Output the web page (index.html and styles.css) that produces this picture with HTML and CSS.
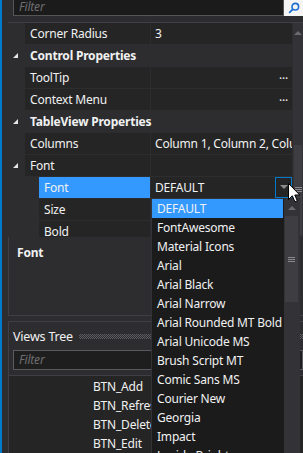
FILE: index.html
```html
<!DOCTYPE html>
<html lang="en">
<head>
    <meta charset="UTF-8">
    <meta name="viewport" content="width=device-width, initial-scale=1.0">
    <title>Properties</title>
    <link rel="stylesheet" href="styles.css">
</head>
<body>
    <div class="accent"></div>
    <div class="main">
        <div class="search">
            <div class="search-box">Filter</div>
            <div class="search-btn">
                <svg width="12" height="12" viewBox="0 0 12 12"><circle cx="7.3" cy="4.7" r="3.3" fill="none" stroke="#1c6ed1" stroke-width="1.6"/><line x1="4.9" y1="7.1" x2="1.2" y2="10.8" stroke="#1c6ed1" stroke-width="1.8"/></svg>
            </div>
        </div>

        <div class="grid">
            <div class="rows">
                <div class="row">
                    <div class="gutter"></div>
                    <div class="name">Corner Radius</div>
                    <div class="value">3</div>
                </div>
                <div class="row category">
                    <div class="gutter"><span class="expander"></span></div>
                    <div class="cat-title">Control Properties</div>
                </div>
                <div class="row">
                    <div class="gutter"></div>
                    <div class="name">ToolTip</div>
                    <div class="value"><span class="ellipsis">...</span></div>
                </div>
                <div class="row">
                    <div class="gutter"></div>
                    <div class="name">Context Menu</div>
                    <div class="value"><span class="ellipsis">...</span></div>
                </div>
                <div class="row category">
                    <div class="gutter"><span class="expander"></span></div>
                    <div class="cat-title">TableView Properties</div>
                </div>
                <div class="row">
                    <div class="gutter"></div>
                    <div class="name">Columns</div>
                    <div class="value">Column 1, Column 2, Column 3</div>
                </div>
                <div class="row">
                    <div class="gutter"><span class="expander"></span></div>
                    <div class="name">Font</div>
                    <div class="value"></div>
                </div>
                <div class="row sub">
                    <div class="gutter"></div>
                    <div class="name selected">Font</div>
                    <div class="value combo">
                        <span>DEFAULT</span>
                        <span class="combo-btn"><span class="arrow-down"></span></span>
                    </div>
                </div>
                <div class="row sub">
                    <div class="gutter"></div>
                    <div class="name">Size</div>
                    <div class="value"></div>
                </div>
                <div class="row sub">
                    <div class="gutter"></div>
                    <div class="name">Bold</div>
                    <div class="value"></div>
                </div>
            </div>
            <div class="vscroll">
                <span class="arrow-up"></span>
                <div class="thumb"><span class="grip"></span></div>
            </div>
        </div>

        <div class="desc">
            <div class="desc-title">Font</div>
        </div>

        <div class="tree-panel">
            <div class="tree-header">
                <span>Views Tree</span>
                <span class="dots"></span>
            </div>
            <div class="tree-filter">Filter</div>
            <div class="tree-list">
                <div class="tree-item">BTN_Add</div>
                <div class="tree-item">BTN_Refresh</div>
                <div class="tree-item">BTN_Delete</div>
                <div class="tree-item">BTN_Edit</div>
            </div>
        </div>
    </div>

    <div class="popup">
        <div class="list">
            <div class="option active">DEFAULT</div>
            <div class="option">FontAwesome</div>
            <div class="option">Material Icons</div>
            <div class="option">Arial</div>
            <div class="option">Arial Black</div>
            <div class="option">Arial Narrow</div>
            <div class="option">Arial Rounded MT Bold</div>
            <div class="option">Arial Unicode MS</div>
            <div class="option">Brush Script MT</div>
            <div class="option">Comic Sans MS</div>
            <div class="option">Courier New</div>
            <div class="option">Georgia</div>
            <div class="option">Impact</div>
            <div class="option">Lucida Bright</div>
        </div>
        <div class="popup-scroll">
            <div class="pbtn"><span class="arrow-up"></span></div>
            <div class="pthumb"><span class="grip"></span></div>
            <div class="ptrack"></div>
            <div class="pbtn"><span class="arrow-down light"></span></div>
        </div>
    </div>

    <svg class="cursor" width="13" height="20" viewBox="0 0 13 20"><path d="M0.5 0.5 L0.5 16.5 L4.3 12.8 L6.9 18.8 L9.3 17.8 L6.8 12 L11.8 12 Z" fill="#fff" stroke="#000" stroke-width="1"/></svg>
</body>
</html>
```

FILE: styles.css
```css
body {
    margin: 0;
    width: 303px;
    height: 453px;
    overflow: hidden;
    position: relative;
    display: flex;
    background-color: #2d2d30;
    color: #f1f1f1;
    font-family: 'Noto Sans', 'Open Sans', sans-serif;
    font-size: 12px;
    letter-spacing: -0.2px;
}

.accent {
    width: 2px;
    flex-shrink: 0;
    background-color: #007acc;
}

.main {
    flex: 1;
    min-width: 0;
    display: flex;
    flex-direction: column;
    padding-left: 6px;
}

/* Top filter */
.search {
    display: flex;
    height: 16px;
    margin-left: 5px;
}

.search-box {
    flex: 1;
    background-color: #1b1b1c;
    border: 1px solid #555558;
    border-top: none;
    color: #6e6e72;
    font-style: italic;
    line-height: 14px;
    padding-left: 5px;
}

.search-btn {
    width: 19px;
    background-color: #f5f5f5;
    display: flex;
    align-items: center;
    justify-content: center;
}

/* Property grid */
.grid {
    margin-top: 6px;
    height: 215px;
    border-top: 1px solid #3f3f46;
    display: flex;
    overflow: hidden;
}

.rows {
    flex: 1;
    min-width: 0;
}

.row {
    display: flex;
    height: 21px;
    margin-bottom: 1px;
    line-height: 21px;
}

.gutter {
    width: 17px;
    flex-shrink: 0;
    position: relative;
}

.row.sub .gutter {
    width: 31px;
}

.expander {
    position: absolute;
    left: 5px;
    top: 8px;
    width: 0;
    height: 0;
    border-left: 5px solid transparent;
    border-bottom: 5px solid #e6e6e6;
}

.name {
    width: 120px;
    flex-shrink: 0;
    background-color: #252526;
    padding-left: 5px;
    margin-right: 1px;
}

.row.sub .name {
    width: 106px;
}

.name.selected {
    background-color: #3399ff;
}

.value {
    flex: 1;
    min-width: 0;
    background-color: #252526;
    padding-left: 4px;
    white-space: nowrap;
    overflow: hidden;
    position: relative;
}

.ellipsis {
    position: absolute;
    right: 4px;
    top: -3px;
}

.combo-btn {
    position: absolute;
    right: 0;
    top: 0;
    width: 15px;
    height: 19px;
    border: 1px solid #007acc;
    display: flex;
    align-items: center;
    justify-content: center;
}

.arrow-down {
    width: 0;
    height: 0;
    border-left: 4px solid transparent;
    border-right: 4px solid transparent;
    border-top: 4px solid #8a8a8a;
}

.arrow-down.light {
    border-top-color: #b0b0b0;
}

.arrow-up {
    width: 0;
    height: 0;
    border-left: 4px solid transparent;
    border-right: 4px solid transparent;
    border-bottom: 4px solid #6b6b6e;
}

.category .cat-title {
    font-weight: bold;
    padding-left: 5px;
}

.vscroll {
    width: 10px;
    flex-shrink: 0;
    margin-left: 1px;
    background-color: #333337;
    display: flex;
    flex-direction: column;
    align-items: center;
    padding-top: 8px;
}

.vscroll .thumb {
    margin-top: 110px;
    width: 8px;
    height: 90px;
    background-color: #3e3e42;
    display: flex;
    align-items: center;
    justify-content: center;
}

.grip {
    width: 7px;
    height: 5px;
    background: repeating-linear-gradient(#8a8a8e 0 1px, transparent 1px 2px);
}

/* Description */
.desc {
    height: 79px;
    border-left: 1px solid #3f3f46;
    border-bottom: 1px solid #3f3f46;
    padding: 7px 8px;
    box-sizing: border-box;
}

.desc-title {
    font-weight: bold;
}

/* Views tree */
.tree-panel {
    margin-top: 5px;
    flex: 1;
    border-top: 1px solid #3f3f46;
    border-left: 1px solid #3f3f46;
    display: flex;
    flex-direction: column;
}

.tree-header {
    height: 28px;
    display: flex;
    align-items: center;
    padding-left: 4px;
    gap: 6px;
    font-size: 12.5px;
}

.dots {
    flex: 1;
    height: 5px;
    background: repeating-conic-gradient(#5c5c60 0 25%, transparent 0 50%) 0 0 / 2px 2px;
}

.tree-filter {
    margin-left: 4px;
    height: 18px;
    border: 1px solid #5a5a5e;
    background-color: #1e1e1e;
    color: #6e6e72;
    font-style: italic;
    line-height: 18px;
    padding-left: 5px;
}

.tree-list {
    margin-top: 5px;
    flex: 1;
    border-top: 1px solid #3f3f46;
    background-color: #252526;
    padding-top: 1px;
}

.tree-item {
    height: 19px;
    line-height: 19px;
    padding-left: 84px;
}

/* Dropdown popup (overlay) */
.popup {
    position: absolute;
    left: 151px;
    top: 198px;
    width: 149px;
    height: 270px;
    display: flex;
    background-color: #1b1b1c;
    border: 1px solid #333337;
    box-sizing: border-box;
}

.list {
    flex: 1;
    overflow: hidden;
}

.option {
    height: 19px;
    line-height: 19px;
    padding-left: 5px;
    white-space: nowrap;
}

.option.active {
    background-color: #3399ff;
}

.popup-scroll {
    width: 15px;
    margin-left: 1px;
    background-color: #333337;
    display: flex;
    flex-direction: column;
}

.pbtn {
    height: 17px;
    display: flex;
    align-items: center;
    justify-content: center;
}

.pthumb {
    height: 86px;
    margin: 0 1px;
    background-color: #3e3e42;
    display: flex;
    align-items: center;
    justify-content: center;
}

.ptrack {
    flex: 1;
}

.cursor {
    position: absolute;
    left: 288px;
    top: 183px;
}
```
